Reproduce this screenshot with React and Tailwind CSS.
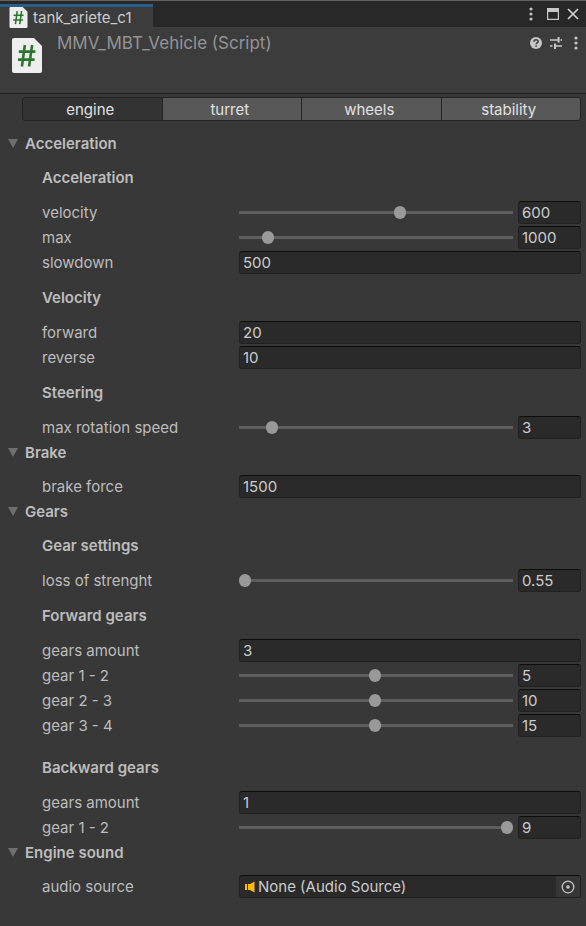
import { useId, useState } from "react";

const fieldClass =
  "h-[23px] min-w-0 rounded-[3px] border border-[#212121] border-t-[#0d0d0d] bg-[#2a2a2a] px-[3px] text-[15px] text-[#cccccc] outline-none";

function ScriptIcon({ className }) {
  return (
    <svg viewBox="0 0 30 35" className={className} aria-hidden="true">
      <path d="M2 0H22L30 8V33a2 2 0 0 1-2 2H2a2 2 0 0 1-2-2V2a2 2 0 0 1 2-2Z" fill="#eeeeee" />
      <path d="M12.9 7 9.9 28.5M20.1 7 17.1 28.5M6.8 13.6H23.4M6 21.6H22.6" stroke="#2a7530" strokeWidth="2.6" fill="none" />
    </svg>
  );
}

function MoreIcon() {
  return (
    <svg viewBox="0 0 4 14" className="h-[14px] w-1" fill="#c4c4c4" aria-hidden="true">
      <circle cx="2" cy="2" r="1.6" />
      <circle cx="2" cy="7" r="1.6" />
      <circle cx="2" cy="12" r="1.6" />
    </svg>
  );
}

function TitleBar() {
  return (
    <div className="flex h-[27px] justify-between border-t border-[#626262] bg-[#282828]">
      <div className="flex w-[153px] flex-col pt-[3px]">
        <div className="h-[3px] shrink-0 bg-[#2c5d87]" />
        <div className="flex flex-1 items-center gap-[5px] bg-[#3c3c3c] pl-[9px]">
          <ScriptIcon className="h-[21px] w-[19px] shrink-0" />
          <span className="text-[15px] leading-5 text-[#cccccc]">tank_ariete_c1</span>
        </div>
      </div>
      <div className="flex items-center pr-[7px]">
        <button aria-label="Tab menu"><MoreIcon /></button>
        <button aria-label="Maximize" className="ml-[14px]">
          <svg viewBox="0 0 12 12" className="size-3" aria-hidden="true">
            <path d="M.6 1H11.4V11.4H.6Z" fill="none" stroke="#c8c8c8" strokeWidth="1.2" />
            <path d="M0 0H12V4H0Z" fill="#c8c8c8" />
          </svg>
        </button>
        <button aria-label="Close" className="ml-2">
          <svg viewBox="0 0 12 12" className="size-3" aria-hidden="true">
            <path d="M1 1 11 11M11 1 1 11" stroke="#d0d0d0" strokeWidth="1.7" />
          </svg>
        </button>
      </div>
    </div>
  );
}

function Header() {
  return (
    <header className="flex h-[67px] items-start border-b border-[#1f1f1f] bg-[#3c3c3c] pr-2 pl-3">
      <ScriptIcon className="mt-[11px] h-[35px] w-[30px] shrink-0" />
      <h1 className="mt-1 ml-[15px] flex-1 text-[17px] leading-6 text-[#949494]">MMV_MBT_Vehicle (Script)</h1>
      <div className="mt-[9px] flex items-center">
        <button aria-label="Help">
          <svg viewBox="0 0 12 12" className="size-3" aria-hidden="true">
            <circle cx="6" cy="6" r="6" fill="#c8c8c8" />
            <path d="M4 4.7C4 2.2 8.2 2.3 8.2 4.5 8.2 5.8 6.1 5.9 6.1 7.3" fill="none" stroke="#3c3c3c" strokeWidth="1.5" />
            <circle cx="6.1" cy="9.1" r=".9" fill="#3c3c3c" />
          </svg>
        </button>
        <button aria-label="Presets" className="ml-2">
          <svg viewBox="0 0 12 12" className="size-3" aria-hidden="true">
            <path d="M0 3H8M10.5 3H12M0 9H2.5M5 9H12" stroke="#c8c8c8" strokeWidth="1.3" />
            <path d="M8.6 0V5.6M5 6.4V12" stroke="#c8c8c8" strokeWidth="2" />
          </svg>
        </button>
        <button aria-label="Component menu" className="ml-3"><MoreIcon /></button>
      </div>
    </header>
  );
}

function Tabs() {
  const [active, setActive] = useState("engine");
  return (
    <div role="tablist" className="mt-[3px] mr-[5px] ml-[22px] grid h-6 grid-cols-4 gap-px overflow-hidden rounded-[3px] border border-[#242424] bg-[#242424]">
      {["engine", "turret", "wheels", "stability"].map((name) => (
        <button
          key={name}
          role="tab"
          aria-selected={active === name}
          onClick={() => setActive(name)}
          className={`pt-[2px] pr-1 text-[15px] leading-5 text-[#e0e0e0] ${active === name ? "bg-[#333333]" : "bg-[#585858]"}`}
        >
          {name}
        </button>
      ))}
    </div>
  );
}

function Section({ title, children }) {
  const [open, setOpen] = useState(true);
  return (
    <section>
      <h2>
        <button
          aria-expanded={open}
          onClick={() => setOpen(!open)}
          className="flex h-[25px] items-center gap-[7px] pl-2 text-[15px] font-semibold"
        >
          <svg viewBox="0 0 10 9" className="h-[9px] w-[10px]" aria-hidden="true">
            <path d={open ? "M0 0H10L5 9Z" : "M0 0 9 4.5 0 9Z"} fill="#6e6e6e" />
          </svg>
          {title}
        </button>
      </h2>
      {open && <div className="pt-[9px] pr-[5px] pl-[42px]">{children}</div>}
    </section>
  );
}

function Heading({ children, className = "mt-[10px]" }) {
  return <h3 className={`mb-[10px] flex h-[25px] items-center text-[15px] font-semibold ${className}`}>{children}</h3>;
}

function Row({ id, label, children }) {
  return (
    <div className="flex h-[25px] items-center">
      <label htmlFor={id} className="w-[197px] shrink-0">{label}</label>
      {children}
    </div>
  );
}

function NumberField({ label, value }) {
  const id = useId();
  return (
    <Row id={id} label={label}>
      <input id={id} inputMode="decimal" defaultValue={value} className={`flex-1 ${fieldClass}`} />
    </Row>
  );
}

function SliderField({ label, value, position }) {
  const id = useId();
  return (
    <Row id={id} label={label}>
      <input
        id={id}
        type="range"
        min="0"
        max="1000"
        defaultValue={position}
        className="h-[13px] min-w-0 flex-1 appearance-none bg-transparent outline-none [&::-webkit-slider-runnable-track]:h-[3px] [&::-webkit-slider-runnable-track]:bg-[#5e5e5e] [&::-webkit-slider-thumb]:-mt-[5px] [&::-webkit-slider-thumb]:h-[13px] [&::-webkit-slider-thumb]:w-3 [&::-webkit-slider-thumb]:appearance-none [&::-webkit-slider-thumb]:rounded-full [&::-webkit-slider-thumb]:bg-[#999999]"
      />
      <input aria-label={`${label} value`} inputMode="decimal" defaultValue={value} className={`ml-[5px] w-[63px] ${fieldClass}`} />
    </Row>
  );
}

function ObjectField({ label, value }) {
  const id = useId();
  return (
    <Row id={id} label={label}>
      <div className="flex h-[23px] min-w-0 flex-1 items-center rounded-[3px] border border-[#212121] border-t-[#0d0d0d] bg-[#2a2a2a] pl-[5px]">
        <svg viewBox="0 0 10 12" className="h-3 w-[10px] shrink-0" fill="#fdb813" aria-hidden="true">
          <path d="M0 3H2V9H0ZM3 3H5L9.5 .5V11.5L5 9H3Z" />
        </svg>
        <input id={id} readOnly defaultValue={value} className="ml-[3px] min-w-0 flex-1 bg-transparent text-[15px] text-[#cccccc] outline-none" />
        <button aria-label="Select audio source" className="flex h-[21px] w-6 items-center justify-center rounded-r-[2px] bg-[#373737]">
          <svg viewBox="0 0 14 14" className="size-[14px]" aria-hidden="true">
            <circle cx="7" cy="7" r="5.8" fill="none" stroke="#c4c4c4" strokeWidth="1.3" />
            <circle cx="7" cy="7" r="1.8" fill="#c4c4c4" />
          </svg>
        </button>
      </div>
    </Row>
  );
}

export default function App() {
  return (
    <div className="min-h-screen bg-[#383838] font-['Inter',sans-serif] text-[15px] leading-5 text-[#bdbdbd]">
      <TitleBar />
      <Header />
      <Tabs />
      <main className="pt-[10px] pb-6">
        <Section title="Acceleration">
          <Heading className="mt-0">Acceleration</Heading>
          <SliderField label="velocity" value="600" position={592} />
          <SliderField label="max" value="1000" position={88} />
          <NumberField label="slowdown" value="500" />
          <Heading>Velocity</Heading>
          <NumberField label="forward" value="20" />
          <NumberField label="reverse" value="10" />
          <Heading>Steering</Heading>
          <SliderField label="max rotation speed" value="3" position={103} />
        </Section>
        <Section title="Brake">
          <NumberField label="brake force" value="1500" />
        </Section>
        <Section title="Gears">
          <Heading className="mt-0">Gear settings</Heading>
          <SliderField label="loss of strenght" value="0.55" position={0} />
          <Heading>Forward gears</Heading>
          <NumberField label="gears amount" value="3" />
          <SliderField label="gear 1 - 2" value="5" position={496} />
          <SliderField label="gear 2 - 3" value="10" position={496} />
          <SliderField label="gear 3 - 4" value="15" position={496} />
          <Heading className="mt-[17px]">Backward gears</Heading>
          <NumberField label="gears amount" value="1" />
          <SliderField label="gear 1 - 2" value="9" position={1000} />
        </Section>
        <Section title="Engine sound">
          <ObjectField label="audio source" value="None (Audio Source)" />
        </Section>
      </main>
    </div>
  );
}
